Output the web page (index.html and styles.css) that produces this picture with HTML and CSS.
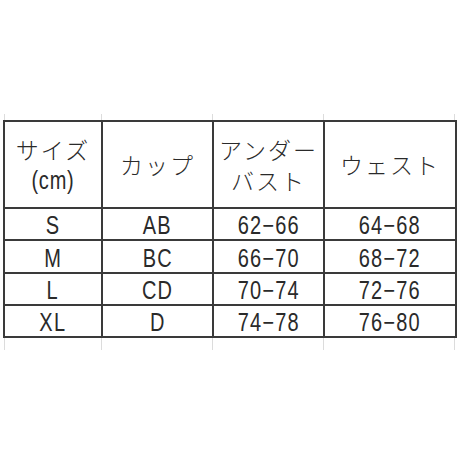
FILE: index.html
```html
<!DOCTYPE html>
<html lang="ja">
<head>
<meta charset="utf-8">
<link rel="stylesheet" href="styles.css">
</head>
<body>
<div class="frame">
<div class="chart">
  <div class="cell head"><span>サイズ</span><span class="narrow">(cm)</span></div>
  <div class="cell head"><span>カップ</span></div>
  <div class="cell head"><span>アンダー</span><span>バスト</span></div>
  <div class="cell head"><span>ウェスト</span></div>

  <div class="cell num"><span class="t">S</span></div><div class="cell num"><span class="t">AB</span></div><div class="cell num"><span class="t">62−66</span></div><div class="cell num"><span class="t">64−68</span></div>
  <div class="cell num"><span class="t">M</span></div><div class="cell num"><span class="t">BC</span></div><div class="cell num"><span class="t">66−70</span></div><div class="cell num"><span class="t">68−72</span></div>
  <div class="cell num"><span class="t">L</span></div><div class="cell num"><span class="t">CD</span></div><div class="cell num"><span class="t">70−74</span></div><div class="cell num"><span class="t">72−76</span></div>
  <div class="cell num"><span class="t">XL</span></div><div class="cell num"><span class="t">D</span></div><div class="cell num"><span class="t">74−78</span></div><div class="cell num"><span class="t">76−80</span></div>
</div>
</div>
</body>
</html>
```
FILE: styles.css
```css
html, body {
  margin: 0;
  padding: 0;
  background: #ffffff;
}
body {
  width: 460px;
  height: 460px;
  overflow: hidden;
}
.frame {
  margin: 114px 0 0 3px;
  padding: 6px 0 12px;
  width: 453px;
  background-image:
    linear-gradient(#dcdcdc, #dcdcdc),
    linear-gradient(#dcdcdc, #dcdcdc),
    linear-gradient(#dcdcdc, #dcdcdc),
    linear-gradient(#dcdcdc, #dcdcdc),
    linear-gradient(#dcdcdc, #dcdcdc);
  background-size: 1px 100%;
  background-repeat: no-repeat;
  background-position: 1px 0, 98px 0, 209px 0, 320px 0, 451px 0;
}
.chart {
  display: grid;
  grid-template-columns: 96px 109px 109px 130px;
  grid-template-rows: 85px 30px 31px 30px 30px;
  gap: 2px;
  padding: 2px;
  width: max-content;
  background: #3a3a3a;
  color: #2a2a2a;
}
.cell {
  background: #ffffff;
  display: flex;
  flex-direction: column;
  align-items: center;
  justify-content: center;
}
.head {
  font-family: "Noto Sans CJK JP", sans-serif;
  font-size: 23px;
  line-height: 31px;
  letter-spacing: 2px;
  font-weight: 300;
}
.head .narrow {
  display: inline-block;
  font-family: "Liberation Sans", sans-serif;
  font-size: 25px;
  letter-spacing: 1px;
  transform: scaleX(0.8);
}
.num {
  font-family: "Liberation Sans", sans-serif;
  font-size: 25px;
  line-height: 28px;
  padding-top: 2px;
}
.t {
  display: inline-block;
  transform: scaleX(0.8);
  letter-spacing: 1.5px;
}
```
